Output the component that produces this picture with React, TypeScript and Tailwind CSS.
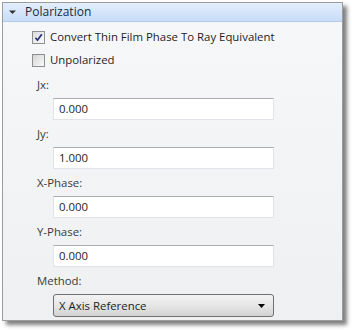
export default function App() {
  const fields = [
    { label: "Jx:", value: "0.000" },
    { label: "Jy:", value: "1.000" },
    { label: "X-Phase:", value: "0.000" },
    { label: "Y-Phase:", value: "0.000" },
  ];

  return (
    <div className="h-[330px] w-[352px] bg-white pl-[2px] pt-[2px] text-[11.4px] text-[#1e1e1e] [font-family:'Open_Sans','Noto_Sans',sans-serif]">
      <div className="w-[341px] border border-[#9c9c9c] shadow-[4px_4px_4px_rgba(0,0,0,0.5)]">
        {/* Expander header */}
        <div className="flex h-[19px] items-center border-b border-[#b3c9e6] bg-gradient-to-b from-[#e3eefc] to-[#c8ddf8] pl-[5px]">
          <svg width="9" height="6" viewBox="0 0 9 6" className="mr-[8px]">
            <path d="M1 1.5h7L4.5 5z" fill="#333" />
          </svg>
          <span className="text-[12px] leading-[16px] text-[#1b2a3f]">Polarization</span>
        </div>

        {/* Body */}
        <div className="bg-gradient-to-b from-[#f6f7f9] to-[#eef0f2] pb-[3px] pt-[7px]">
          <div className="flex flex-col gap-[7px] pl-[29px]">
            <label className="flex h-[16px] items-center gap-[5px]">
              <span className="flex h-[13px] w-[13px] items-center justify-center border border-[#8e8f8f] bg-gradient-to-br from-[#dcdcdc] to-[#fbfbfb]">
                <svg width="9" height="9" viewBox="0 0 9 9">
                  <path d="M1.5 4.8l2 2.4L7.8 1.2" fill="none" stroke="#23307c" strokeWidth="1.7" />
                </svg>
              </span>
              <span className="leading-[16px]">Convert Thin Film Phase To Ray Equivalent</span>
            </label>
            <label className="flex h-[16px] items-center gap-[5px]">
              <span className="h-[13px] w-[13px] border border-[#8e8f8f] bg-gradient-to-br from-[#d4d4d4] to-[#fafafa]" />
              <span className="leading-[16px]">Unpolarized</span>
            </label>
          </div>

          <div className="mt-[9px] flex flex-col">
            {fields.map((f) => (
              <div key={f.label} className="mb-[6px]">
                <div className="mb-[5px] h-[16px] pl-[34px] leading-[16px] text-[#3a3a3a]">{f.label}</div>
                <div className="ml-[50px] flex h-[22px] w-[221px] items-center border border-[#e2e3ea] border-t-[#abadb3] bg-white pl-[5px]">
                  {f.value}
                </div>
              </div>
            ))}
            <div className="mb-[5px] h-[16px] pl-[34px] leading-[16px] text-[#3a3a3a]">Method:</div>
            <div className="ml-[50px] flex h-[23px] w-[221px] items-center justify-between rounded-[3px] border border-[#707070] bg-gradient-to-b from-[#f3f3f3] via-[#e6e6e6] to-[#d2d2d2] pl-[5px] pr-[8px]">
              <span>X Axis Reference</span>
              <svg width="7" height="4" viewBox="0 0 7 4">
                <path d="M0 0h7L3.5 4z" fill="#000" />
              </svg>
            </div>
          </div>
        </div>
      </div>
    </div>
  );
}
